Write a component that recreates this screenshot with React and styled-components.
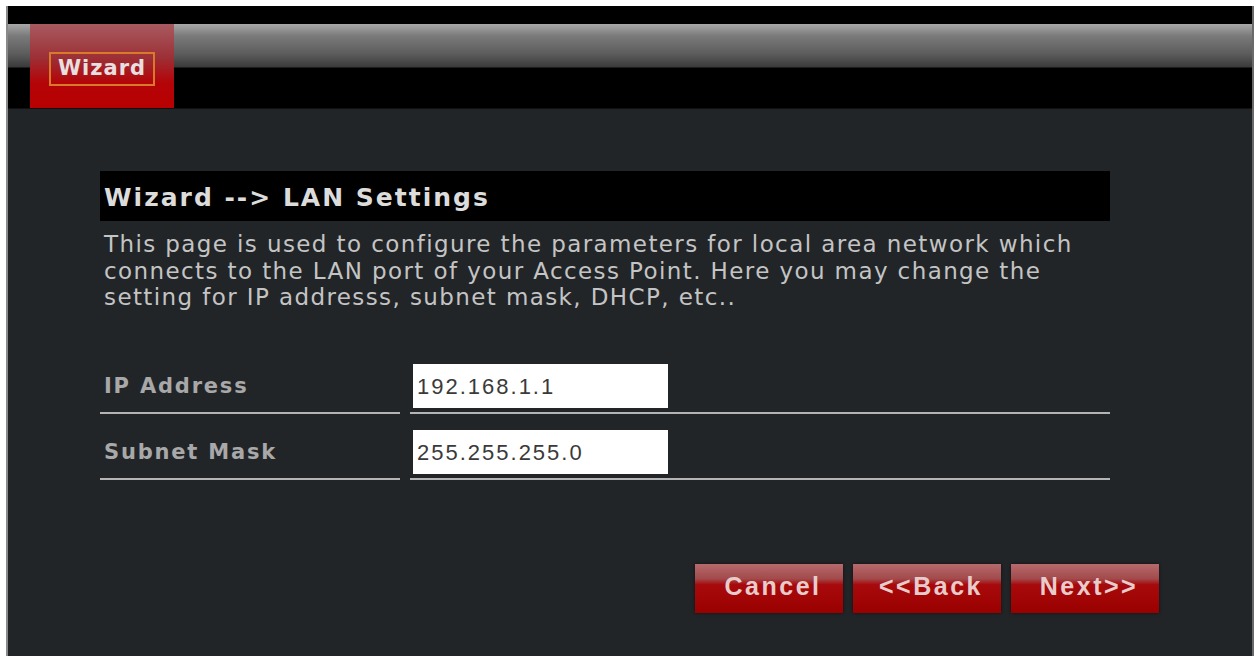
import React from "react";
import styled, { createGlobalStyle } from "styled-components";

const GlobalStyle = createGlobalStyle`
  html, body {
    margin: 0;
    padding: 0;
    background: #ffffff;
  }
  body {
    font-family: "DejaVu Sans", Verdana, sans-serif;
  }
`;

const Frame = styled.div`
  margin: 6px 3px 0 6px;
  height: 650px;
  background: #222528;
  border-left: 2px solid #8a8a8a;
  border-right: 2px solid #6a6a6a;
  display: flex;
  flex-direction: column;
`;

const TopStrip = styled.div`
  height: 18px;
  background: #000;
`;

const MenuBar = styled.div`
  height: 84px;
  display: flex;
  background: linear-gradient(
    to bottom,
    #a8a8a8 0px,
    #7a7a7a 12px,
    #5c5c5c 30px,
    #3a3a3a 43px,
    #000 44px,
    #000 100%
  );
  border-bottom: 1px solid #111;
`;

const MenuGap = styled.div`
  width: 22px;
`;

const Tab = styled.div`
  width: 144px;
  display: flex;
  align-items: center;
  justify-content: center;
  padding-top: 6px;
  background: linear-gradient(to bottom, #a85a60 0%, #9c3036 40%, #b40408 70%, #b80000 100%);
`;

const TabLabel = styled.span`
  border: 2px solid #d97a2a;
  padding: 2px 7px 4px;
  font-family: "DejaVu Sans", Verdana, sans-serif;
  font-weight: bold;
  font-size: 21px;
  color: #e8e0e0;
  letter-spacing: 1px;
`;

const Content = styled.div`
  flex: 1;
  padding: 62px 142px 0 92px;
  display: flex;
  flex-direction: column;
`;

const Heading = styled.h2`
  margin: 0;
  height: 48px;
  background: #000;
  display: flex;
  align-items: center;
  padding: 2px 4px 0;
  font-family: "DejaVu Sans", Verdana, sans-serif;
  font-size: 25px;
  font-weight: bold;
  letter-spacing: 2px;
  color: #dcdcdc;
`;

const Description = styled.p`
  margin: 10px 0 0;
  padding-left: 4px;
  white-space: nowrap;
  font-family: "DejaVu Sans", Verdana, sans-serif;
  font-size: 23px;
  letter-spacing: 1.4px;
  line-height: 26.5px;
  color: #c4c4c4;
`;

const Form = styled.div`
  margin-top: 45px;
  display: flex;
  flex-direction: column;
`;

const Row = styled.div`
  display: grid;
  grid-template-columns: 300px 1fr;
  column-gap: 10px;
  height: ${(p) => p.$height}px;
`;

const Cell = styled.div`
  display: flex;
  align-items: flex-end;
  padding-bottom: 4px;
  border-bottom: 2px solid #b4b4b4;
`;

const Label = styled.div`
  height: 44px;
  line-height: 44px;
  padding-left: 4px;
  font-family: "DejaVu Sans", Verdana, sans-serif;
  font-weight: bold;
  font-size: 21px;
  letter-spacing: 1.8px;
  color: #a8a8a8;
`;

const TextInput = styled.input`
  width: 255px;
  height: 44px;
  margin-left: 3px;
  box-sizing: border-box;
  border: none;
  background: #fff;
  padding: 2px 4px 0;
  font-family: "Liberation Sans", Arial, sans-serif;
  font-size: 22px;
  letter-spacing: 2px;
  color: #3a3a3a;
  outline: none;
`;

const ButtonBar = styled.div`
  margin-top: 84px;
  margin-right: -49px;
  display: flex;
  justify-content: flex-end;
  gap: 10px;
`;

const Button = styled.button`
  width: 148px;
  height: 49px;
  border: none;
  padding: 0 0 4px 8px;
  background: linear-gradient(to bottom, #b66a6c 0%, #a24a4c 30%, #a80a0c 42%, #9a0000 100%);
  font-family: "Liberation Sans", Arial, sans-serif;
  font-weight: bold;
  font-size: 25px;
  letter-spacing: 2.5px;
  color: #e8cccc;
  box-shadow: 0 0 3px rgba(0, 0, 0, 0.6);
`;

export default function App() {
  return (
    <>
      <GlobalStyle />
      <Frame>
        <TopStrip />
        <MenuBar>
          <MenuGap />
          <Tab>
            <TabLabel>Wizard</TabLabel>
          </Tab>
        </MenuBar>
        <Content>
          <Heading>Wizard --&gt; LAN Settings</Heading>
          <Description>
            This page is used to configure the parameters for local area network which
            <br />
            connects to the LAN port of your Access Point. Here you may change the
            <br />
            setting for IP addresss, subnet mask, DHCP, etc..
          </Description>
          <Form>
            <Row $height={58}>
              <Cell>
                <Label>IP Address</Label>
              </Cell>
              <Cell>
                <TextInput defaultValue="192.168.1.1" />
              </Cell>
            </Row>
            <Row $height={66}>
              <Cell>
                <Label>Subnet Mask</Label>
              </Cell>
              <Cell>
                <TextInput defaultValue="255.255.255.0" />
              </Cell>
            </Row>
          </Form>
          <ButtonBar>
            <Button>Cancel</Button>
            <Button>&lt;&lt;Back</Button>
            <Button>Next&gt;&gt;</Button>
          </ButtonBar>
        </Content>
      </Frame>
    </>
  );
}
